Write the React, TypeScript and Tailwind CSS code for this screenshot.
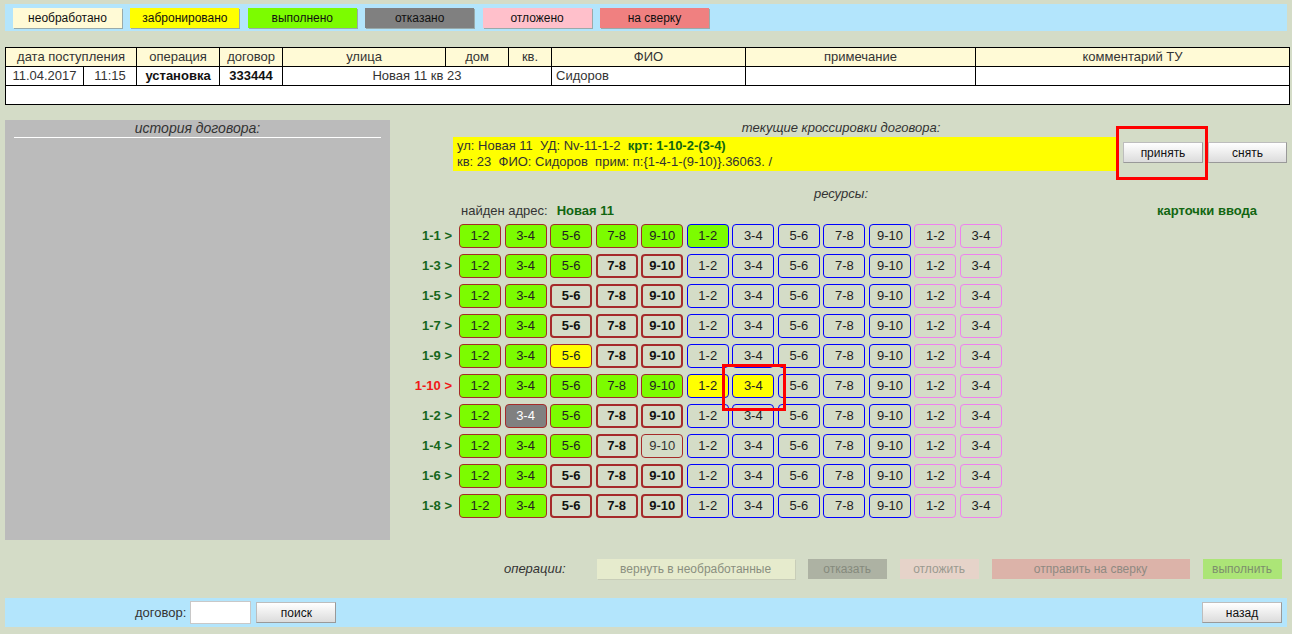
import React from "react";

type Cell = { t: string; k: "g" | "b" | "y" | "gr" | "e" | "n" | "bl" | "by" | "v" };

const narrow = "font-['Liberation_Sans_Narrow','Liberation_Sans',sans-serif]";

const cls: Record<Cell["k"], string> = {
  g: "bg-[#7cfc00] border border-[#a52a2a] text-[#222]",
  y: "bg-[#ffff00] border border-[#a52a2a] text-[#222]",
  gr: "bg-[#808080] border border-[#a52a2a] text-white",
  b: "border-2 border-[#a52a2a] font-bold text-[#111]",
  n: "border border-[#a52a2a] text-[#333]",
  e: "border border-[#0000ff] text-[#222]",
  bl: "bg-[#7cfc00] border border-[#0000ff] text-[#222]",
  by: "bg-[#ffff00] border border-[#0000ff] text-[#222]",
  v: "border border-[#ee82ee] text-[#222]",
};

const labels = ["1-2", "3-4", "5-6", "7-8", "9-10", "1-2", "3-4", "5-6", "7-8", "9-10", "1-2", "3-4"];

function row(first: Cell["k"][], six: Cell["k"], seven: Cell["k"] = "e"): Cell[] {
  const ks: Cell["k"][] = [...first, six, seven, "e", "e", "e", "v", "v"];
  return ks.map((k, i) => ({ t: labels[i], k }));
}

const rows: { label: string; red?: boolean; cells: Cell[] }[] = [
  { label: "1-1 >", cells: row(["g", "g", "g", "g", "g"], "bl") },
  { label: "1-3 >", cells: row(["g", "g", "g", "b", "b"], "e") },
  { label: "1-5 >", cells: row(["g", "g", "b", "b", "b"], "e") },
  { label: "1-7 >", cells: row(["g", "g", "b", "b", "b"], "e") },
  { label: "1-9 >", cells: row(["g", "g", "y", "b", "b"], "e") },
  { label: "1-10 >", red: true, cells: row(["g", "g", "g", "g", "g"], "by", "by") },
  { label: "1-2 >", cells: row(["g", "gr", "g", "b", "b"], "e") },
  { label: "1-4 >", cells: row(["g", "g", "g", "b", "n"], "e") },
  { label: "1-6 >", cells: row(["g", "g", "b", "b", "b"], "e") },
  { label: "1-8 >", cells: row(["g", "g", "b", "b", "b"], "e") },
];

const grayBtn =
  "bg-gradient-to-b from-white to-[#dcdcdc] border border-[#bdbdbd] border-b-[#999] border-r-[#999] text-[#111] flex items-center justify-center";

export default function App() {
  return (
    <div className="w-[1292px] h-[634px] bg-[#d4dcc7] font-['Liberation_Sans',sans-serif] text-[13px] overflow-hidden relative">
      {/* top status bar */}
      <div className={`mx-[5px] mt-[4px] h-[27px] bg-[#b3e5fc] flex items-center pl-[8px] gap-[8.4px] ${narrow} text-[12px] text-[#111]`}>
        {[
          ["необработано", "bg-[#fffad6]"],
          ["забронировано", "bg-[#ffff00]"],
          ["выполнено", "bg-[#7cfc00]"],
          ["отказано", "bg-[#808080]"],
          ["отложено", "bg-[#ffc0cb]"],
          ["на сверку", "bg-[#f08080]"],
        ].map(([t, c]) => (
          <div
            key={t}
            className={`${c} w-[109px] h-[20px] flex items-center justify-center shadow-[1px_1px_0_#9aa] `}
          >
            {t}
          </div>
        ))}
      </div>

      {/* table */}
      <table className={`mx-[5px] mt-[16px] w-[1284px] border-collapse border border-black table-fixed ${narrow} text-[13px] text-[#333]`}>
        <colgroup>
          <col className="w-[78px]" />
          <col className="w-[53px]" />
          <col className="w-[83px]" />
          <col className="w-[63px]" />
          <col className="w-[163px]" />
          <col className="w-[63px]" />
          <col className="w-[43px]" />
          <col className="w-[194px]" />
          <col className="w-[230px]" />
          <col className="w-[314px]" />
        </colgroup>
        <tbody>
          <tr className="h-[19px] bg-[#fffad6]">
            <td colSpan={2} className="border border-black text-center font-normal leading-[16px] p-0">дата поступления</td>
            <td className="border border-black text-center leading-[16px] p-0">операция</td>
            <td className="border border-black text-center leading-[16px] p-0">договор</td>
            <td className="border border-black text-center leading-[16px] p-0">улица</td>
            <td className="border border-black text-center leading-[16px] p-0">дом</td>
            <td className="border border-black text-center leading-[16px] p-0">кв.</td>
            <td className="border border-black text-center leading-[16px] p-0">ФИО</td>
            <td className="border border-black text-center leading-[16px] p-0">примечание</td>
            <td className="border border-black text-center leading-[16px] p-0">комментарий ТУ</td>
          </tr>
          <tr className="h-[19px] bg-white">
            <td className="border border-black text-center leading-[16px] p-0">11.04.2017</td>
            <td className="border border-black text-center leading-[16px] p-0">11:15</td>
            <td className="border border-black text-center leading-[16px] p-0 font-bold text-[#111]">установка</td>
            <td className="border border-black text-center leading-[16px] p-0 font-bold text-[#111]">333444</td>
            <td colSpan={3} className="border border-black text-center leading-[16px] p-0">Новая 11 кв 23</td>
            <td className="border border-black text-left pl-[4px] leading-[16px] p-0">Сидоров</td>
            <td className="border border-black p-0"></td>
            <td className="border border-black p-0"></td>
          </tr>
          <tr className="h-[19px] bg-white">
            <td colSpan={10} className="p-0"></td>
          </tr>
        </tbody>
      </table>

      {/* main */}
      <div className="flex mt-[15px] h-[420px]">
        <div className="ml-[5px] w-[385px] h-[420px] bg-[#bbbbbb] flex flex-col">
          <div className="text-center italic text-[14px] text-[#333] leading-[16px]">история договора:</div>
          <div className="mx-[9px] h-px bg-white mt-px" />
        </div>

        <div className="flex-1 flex flex-col">
          <div className="text-center italic text-[13px] text-[#333] leading-[15px] mt-[0px]">текущие кроссировки договора:</div>
          <div className="flex items-start mt-[2px]">
            <div className="ml-[63px] w-[665px] h-[34px] bg-[#ffff00] pl-[4px] pt-[1px] text-[13px] leading-[16px] text-[#333] whitespace-pre">
              <div>
                ул: Новая 11  УД: Nv-11-1-2  <span className="font-bold text-[#116611]">крт: 1-10-2-(3-4)</span>
              </div>
              <div>кв: 23  ФИО: Сидоров  прим: п:{"{1-4-1-(9-10)}"}.36063. /</div>
            </div>
            <div className={`ml-[5px] mt-[5px] w-[80px] h-[21px] ${grayBtn} text-[12px]`}>принять</div>
            <div className={`ml-[5px] mt-[5px] w-[79px] h-[21px] ${grayBtn} text-[12px]`}>снять</div>
          </div>
          <div className="text-center italic text-[13px] text-[#333] leading-[15px] mt-[15px]">ресурсы:</div>
          <div className="flex items-center h-[18px] mt-[1px] text-[13px]">
            <span className="ml-[71px] text-[#333]">найден адрес:</span>
            <span className="ml-[9px] font-bold text-[#116611]">Новая 11</span>
            <span className="ml-auto mr-[35px] font-bold text-[#116611]">карточки ввода</span>
          </div>

          <div className="mt-[4px] flex flex-col gap-[6px]">
            {rows.map((r) => (
              <div key={r.label} className="flex items-center h-[24px]">
                <div className={`w-[62px] text-right font-bold text-[13px] ${r.red ? "text-[#f01818]" : "text-[#17661b]"}`}>
                  {r.label}
                </div>
                <div className="ml-[7px] grid grid-cols-[repeat(12,42px)] gap-x-[3.55px]">
                  {r.cells.map((c, i) => (
                    <div
                      key={i}
                      className={`h-[24px] rounded-[4px] flex items-center justify-center text-[13px] ${cls[c.k]}`}
                    >
                      {c.t}
                    </div>
                  ))}
                </div>
              </div>
            ))}
          </div>
        </div>
      </div>

      {/* operations */}
      <div className={`flex items-center mt-[19px] h-[20px] ${narrow} text-[12px]`}>
        <span className="ml-[504px] italic text-[13px] text-[#333]">операции:</span>
        <div className="ml-[31px] w-[198px] h-[20px] bg-[#e6ebcd] text-[#8a8f80] flex items-center justify-center shadow-[1px_1px_0_#c8cdb8]">вернуть в необработанные</div>
        <div className="ml-[13px] w-[79px] h-[20px] bg-[#adb2a3] text-[#858a7d] flex items-center justify-center">отказать</div>
        <div className="ml-[13px] w-[79px] h-[20px] bg-[#e6d3c9] text-[#9a9a90] flex items-center justify-center">отложить</div>
        <div className="ml-[13px] w-[198px] h-[20px] bg-[#dcb3a9] text-[#8f8a82] flex items-center justify-center">отправить на сверку</div>
        <div className="ml-[13px] w-[79px] h-[20px] bg-[#ace577] text-[#7d8f6d] flex items-center justify-center">выполнить</div>
      </div>

      {/* bottom bar */}
      <div className="mx-[5px] mt-[19px] h-[29px] bg-[#b3e5fc] flex items-center text-[13px]">
        <span className="ml-[130px] text-[#333]">договор:</span>
        <div className="ml-[4px] w-[61px] h-[23px] bg-white border border-[#c8c8c8]" />
        <div className={`ml-[5px] w-[80px] h-[21px] ${grayBtn} text-[12px]`}>поиск</div>
        <div className={`ml-auto mr-[5px] w-[80px] h-[21px] ${grayBtn} text-[12px] ${narrow}`}>назад</div>
      </div>

      {/* red highlight boxes */}
      <div className="absolute left-[1116px] top-[126px] w-[92px] h-[54px] border-[3px] border-[#ff0000] pointer-events-none" />
      <div className="absolute left-[722px] top-[364px] w-[64px] h-[47px] border-[3px] border-[#ff0000] pointer-events-none" />
    </div>
  );
}
